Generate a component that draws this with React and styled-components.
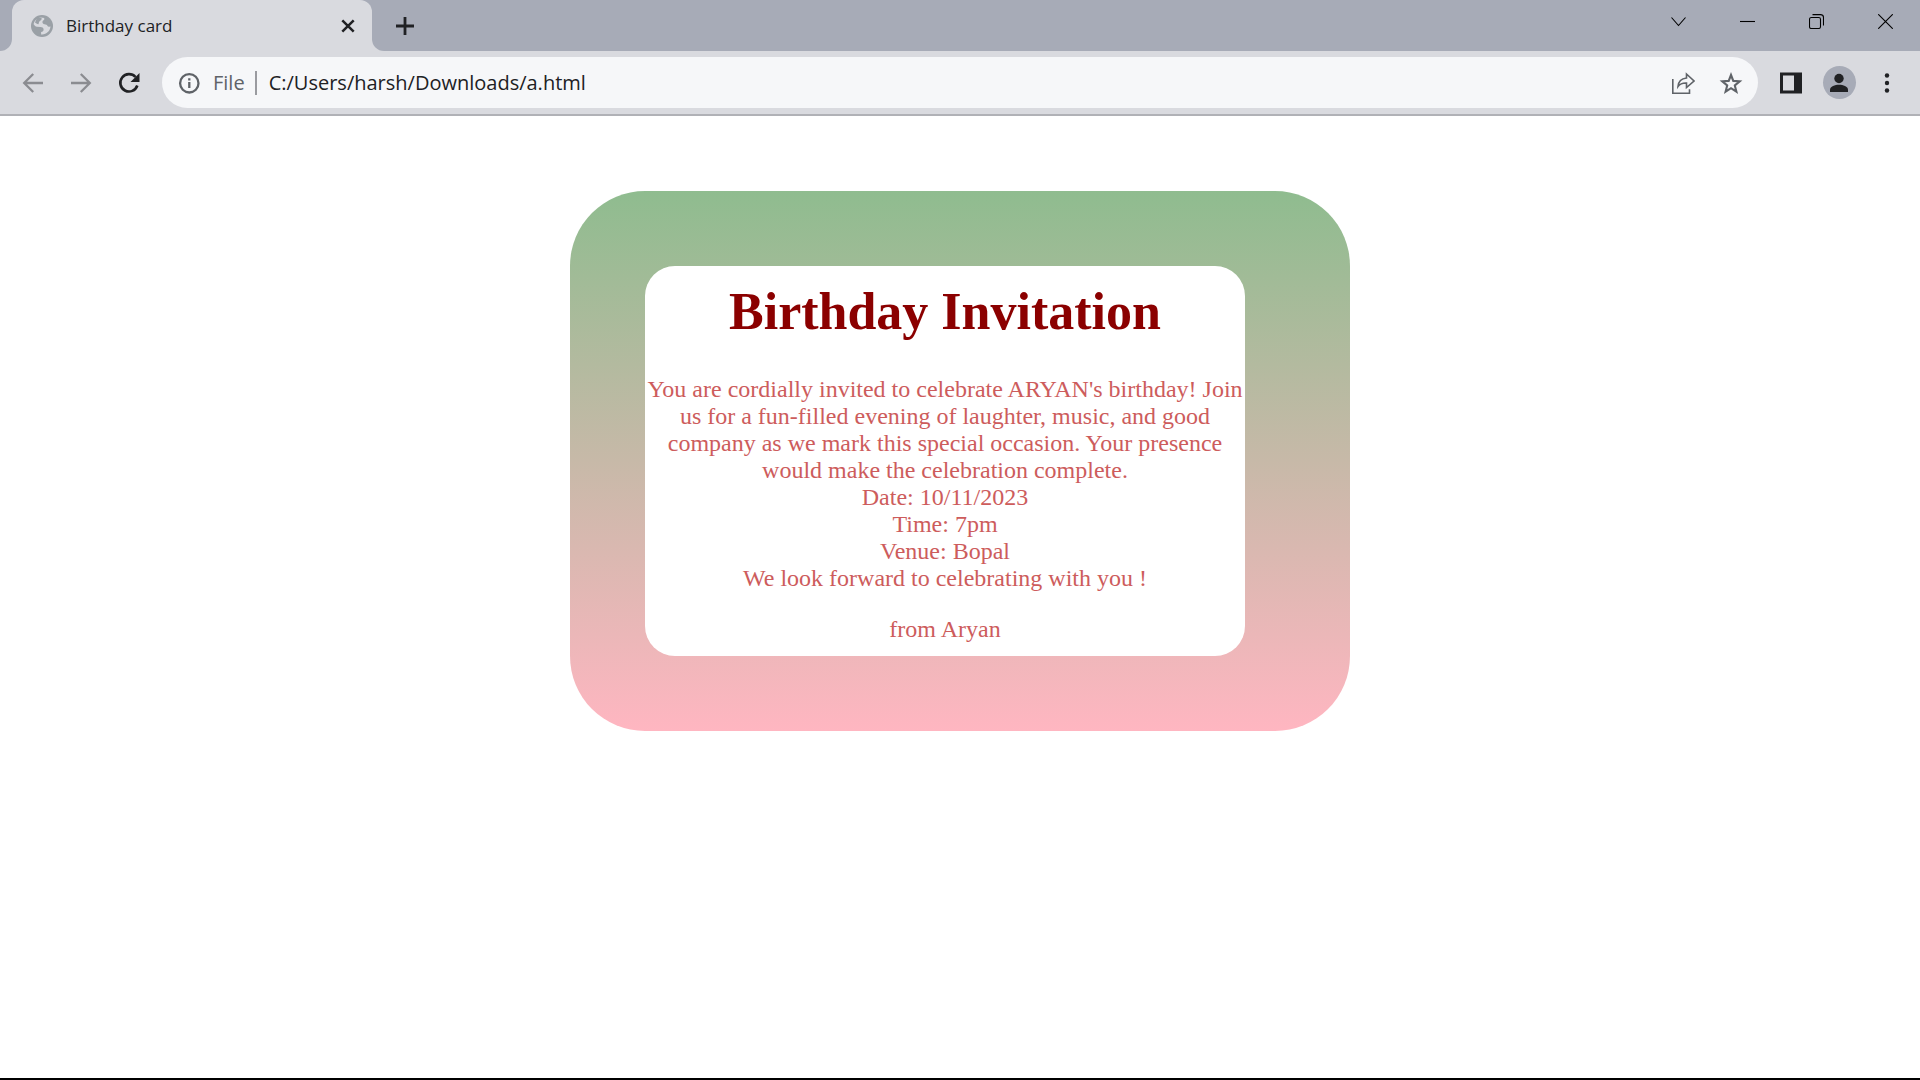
import React, { useState } from "react";
import styled, { createGlobalStyle } from "styled-components";

const color = {
  strip: "#a7abb7",
  bar: "#d9dadf",
  field: "#f6f7f9",
  line: "#b0b1b6",
  ink: "#202124",
  muted: "#5f6368",
  faint: "#8b8c91",
};

const GlobalStyle = createGlobalStyle`
  * { box-sizing: border-box; }
  body { margin: 0; background: #fff; }
`;

const Window = styled.div`
  display: flex;
  flex-direction: column;
  min-height: 100vh;
  border-bottom: 2px solid #000;
  font-family: "Open Sans", "Noto Sans", sans-serif;
  color: ${color.ink};
`;

const TabStrip = styled.header`
  display: flex;
  height: 51px;
  background: ${color.bar};
`;

const StripEdge = styled.div`
  width: 12px;
  background: ${color.strip};
  border-bottom-right-radius: 12px;
`;

const TabSlot = styled.div`
  width: 360px;
  background: linear-gradient(${color.strip} 50%, ${color.bar} 50%);
`;

const Tab = styled.div`
  display: flex;
  align-items: center;
  gap: 12px;
  height: 100%;
  padding: 0 12px 0 18px;
  background: ${color.bar};
  border-radius: 12px 12px 0 0;
`;

const TabTitle = styled.span`
  flex: 1;
  font-size: 17px;
  line-height: 24px;
`;

const StripRest = styled.div`
  display: flex;
  flex: 1;
  justify-content: space-between;
  padding-left: 9px;
  background: ${color.strip};
  border-bottom-left-radius: 12px;
`;

const WindowControls = styled.div`
  display: flex;
`;

const IconButton = styled.button`
  display: flex;
  flex: none;
  align-items: center;
  justify-content: center;
  width: ${(p) => p.$width || 48}px;
  height: ${(p) => p.$height || 51}px;
  padding: 0;
  border: 0;
  background: none;
  color: ${(p) => p.$color || color.ink};
`;

const Toolbar = styled.nav`
  display: flex;
  align-items: center;
  height: 65px;
  padding: 4px 9px;
  background: ${color.bar};
  border-bottom: 2px solid ${color.line};
`;

const AddressBar = styled.form`
  display: flex;
  flex: 1;
  align-items: center;
  height: 51px;
  margin: 0 9px;
  padding: 0 3px 0 15px;
  background: ${color.field};
  border-radius: 26px;
`;

const Scheme = styled.label`
  margin-left: 12px;
  padding-right: 10px;
  border-right: 2px solid #9a9ba0;
  color: ${color.muted};
  font-size: 20px;
  line-height: 24px;
`;

const Address = styled.input`
  flex: 1;
  min-width: 0;
  margin-left: 12px;
  padding: 0;
  border: 0;
  outline: 0;
  background: none;
  color: ${color.ink};
  font-family: inherit;
  font-size: 20px;
  line-height: 28px;
`;

const Avatar = styled.span`
  display: flex;
  align-items: center;
  justify-content: center;
  width: 33px;
  height: 33px;
  border-radius: 50%;
  background: ${color.strip};
`;

const Page = styled.main`
  flex: 1;
  padding: 75px 24px;
  font-family: "Liberation Serif", "Times New Roman", serif;
`;

const Card = styled.article`
  max-width: 780px;
  margin: 0 auto;
  padding: 75px;
  border-radius: 75px;
  background: linear-gradient(darkseagreen, lightpink);
`;

const Invitation = styled.div`
  max-width: 600px;
  padding: 16px 0 13px;
  border-radius: 30px;
  background: #fff;
  text-align: center;
`;

const Title = styled.h1`
  margin: 0 0 34px;
  color: darkred;
  font-size: 52px;
  line-height: 60px;
`;

const Message = styled.p`
  margin: ${(p) => p.$top || 0}px 0 0;
  color: indianred;
  font-size: 24px;
  line-height: 27px;
`;

const Icon = ({ size = 24, stroke = 2, children, ...rest }) => (
  <svg width={size} height={size} viewBox="0 0 24 24" fill="none" stroke="currentColor" strokeWidth={stroke} aria-hidden="true" {...rest}>
    {children}
  </svg>
);

/* Caption glyphs sit on an odd grid so that they centre in the 69x43 buttons. */
const CaptionIcon = ({ children }) => (
  <svg width="15" height="15" viewBox="0 0 15 15" fill="none" stroke="#000" strokeWidth="1.1" aria-hidden="true">
    {children}
  </svg>
);

export default function App() {
  const [url, setUrl] = useState("C:/Users/harsh/Downloads/a.html");
  return (
    <Window>
      <GlobalStyle />
      <TabStrip>
        <StripEdge />
        <TabSlot>
          <Tab>
            <Icon stroke={0}>
              <circle cx="12" cy="12" r="11" fill="#9aa0a6" />
              <path fill={color.bar} d="M11 3.5c2 .2 3 .3 3.500 1.300c-.4 1.600-1.500 1.500-2 2.700c-.4 1.300.6 2.500 2 2.700c1.500.2 2.400.4 2.900 1.500c.4 1 1.600 1 3.100.9c-.3 4.400-3.900 7.900-8.500 7.900l-.9-.1v-2.400c1.500-.2 2.600-1 2.500-2.600c-.1-1.700-1.500-2.300-3.100-2.400l-3.500-.2c-1.500-.2-2.500-1.300-3.400-2.500C4.300 6.700 7 3.900 11 3.500z" />
              <path fill="#9aa0a6" d="M5 8.500c1 .4 1.800 1.700 3.500 1.700c.5-1.700.4-2.900 2-3.700c1.200-.6 1.400-1.700.9-2.800L7 4z" />
            </Icon>
            <TabTitle>Birthday card</TabTitle>
            <IconButton $width={24} $height={24} aria-label="Close tab">
              <Icon stroke={2.5}><path d="M6.300 6.300l11.400 11.400M17.700 6.300l-11.400 11.400" /></Icon>
            </IconButton>
          </Tab>
        </TabSlot>
        <StripRest>
          <IconButton aria-label="New tab">
            <Icon stroke={2.8}><path d="M12 3v18M3 12h18" /></Icon>
          </IconButton>
          <WindowControls>
            <IconButton $width={69} $height={43} aria-label="Search tabs">
              <CaptionIcon><path d="M.5 3.500l7 8 7-8" /></CaptionIcon>
            </IconButton>
            <IconButton $width={69} $height={43} aria-label="Minimize">
              <CaptionIcon><path d="M0 7.500h15" /></CaptionIcon>
            </IconButton>
            <IconButton $width={69} $height={43} aria-label="Restore">
              <CaptionIcon>
                <rect x=".5" y="3.500" width="11" height="11" rx="1.800" />
                <path d="M3.500.6h8a3 3 0 0 1 3 3v8" />
              </CaptionIcon>
            </IconButton>
            <IconButton $width={69} $height={43} aria-label="Close window">
              <CaptionIcon><path d="M.2.2l14.600 14.600M14.800.2l-14.600 14.600" /></CaptionIcon>
            </IconButton>
          </WindowControls>
        </StripRest>
      </TabStrip>
      <Toolbar>
        <IconButton $color={color.faint} aria-label="Back">
          <Icon stroke={2.3}><path d="M22 12H3.500M12.200 3l-9 9 9 9" /></Icon>
        </IconButton>
        <IconButton $color={color.faint} aria-label="Forward">
          <Icon stroke={2.3}><path d="M2 12h18.500M11.800 3l9 9-9 9" /></Icon>
        </IconButton>
        <IconButton aria-label="Reload">
          <Icon stroke={2.6}>
            <path d="M20.300 14.500A8.700 8.700 0 1 1 18.500 6" />
            <path d="M22.500 2v9h-9z" fill="currentColor" stroke="none" />
          </Icon>
        </IconButton>
        <AddressBar onSubmit={(e) => e.preventDefault()}>
          <Icon color={color.muted} stroke={2.3}>
            <circle cx="12.300" cy="12.300" r="9.200" />
            <path d="M12.300 11v6M12.300 7.200v2.300" />
          </Icon>
          <Scheme htmlFor="address">File</Scheme>
          <Address id="address" value={url} spellCheck={false} onChange={(e) => setUrl(e.target.value)} />
          <IconButton $color={color.muted} aria-label="Share">
            <Icon stroke={1.6}>
              <path d="M1.800 8v14.200h16.700v-4" />
              <path d="M15.500 3l7.500 7-7.500 6.500v-4.500c-4-.2-6.500.8-8.500 3.500c.4-5 3.500-8 8.500-8.500z" />
            </Icon>
          </IconButton>
          <IconButton $color={color.muted} aria-label="Bookmark this page">
            <Icon stroke={2.1}><path d="M12 4l2.300 5.900 6.400.4-4.900 4.100 1.600 6.300-5.400-3.500-5.400 3.500 1.600-6.300-4.900-4.100 6.400-.4z" /></Icon>
          </IconButton>
        </AddressBar>
        <IconButton aria-label="Side panel">
          <Icon stroke={0}>
            <path fill="currentColor" fillRule="evenodd" d="M1 1.500h22v21h-22zM4 4.500v15h11v-15z" />
          </Icon>
        </IconButton>
        <IconButton aria-label="Profile">
          <Avatar>
            <Icon stroke={0}>
              <circle cx="12" cy="7.500" r="4.700" fill="currentColor" />
              <path fill="currentColor" d="M3 21v-2.500c0-3 5-4.700 9-4.700s9 1.700 9 4.700V21z" />
            </Icon>
          </Avatar>
        </IconButton>
        <IconButton aria-label="Menu">
          <Icon stroke={0}>
            <g fill="currentColor">
              <circle cx="12" cy="4.500" r="2.200" />
              <circle cx="12" cy="12" r="2.200" />
              <circle cx="12" cy="19.500" r="2.200" />
            </g>
          </Icon>
        </IconButton>
      </Toolbar>
      <Page>
        <Card>
          <Invitation>
            <Title>Birthday Invitation</Title>
            <Message>
              You are cordially invited to celebrate ARYAN's birthday! Join us for a fun-filled evening of
              laughter, music, and good company as we mark this special occasion. Your presence would make the
              celebration complete.
              <br />
              Date: 10/11/2023
              <br />
              Time: 7pm
              <br />
              Venue: Bopal
              <br />
              We look forward to celebrating with you !
            </Message>
            <Message $top={24}>from Aryan</Message>
          </Invitation>
        </Card>
      </Page>
    </Window>
  );
}
